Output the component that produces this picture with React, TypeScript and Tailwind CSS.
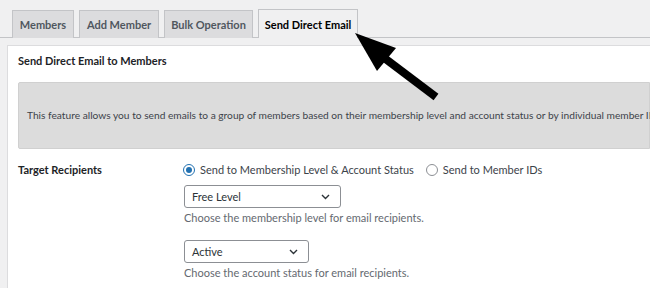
import React from 'react';

const TABS = [
  { label: 'Members', width: 'w-[62px]' },
  { label: 'Add Member', width: 'w-[80px]' },
  { label: 'Bulk Operation', width: 'w-[89px]' },
  { label: 'Send Direct Email', width: 'w-[100px]' },
];

function Select({ value, width }: { value: string; width: string }) {
  return (
    <div
      className={`${width} h-[23px] flex items-center justify-between pl-[7px] pr-[10px] bg-white border border-[#8c8f94] rounded-[3px] text-[11px] text-[#2c3338]`}
    >
      <span>{value}</span>
      <svg width="9" height="6" viewBox="0 0 9 6" fill="none">
        <path d="M1 1 L4.5 4.5 L8 1" stroke="#2c3338" strokeWidth="1.4" />
      </svg>
    </div>
  );
}

function Radio({ checked, label }: { checked: boolean; label: string }) {
  return (
    <label className="flex items-center gap-[5px]">
      <span
        className={`w-[12px] h-[12px] rounded-full border flex items-center justify-center bg-white ${
          checked ? 'border-[#2271b1]' : 'border-[#8c8f94]'
        }`}
      >
        {checked && <span className="w-[6px] h-[6px] rounded-full bg-[#2271b1]" />}
      </span>
      <span>{label}</span>
    </label>
  );
}

export default function App() {
  return (
    <div
      className="relative w-[650px] h-[288px] overflow-hidden bg-[#f0f0f1] text-[#3c434a]"
      style={{ fontFamily: 'Lato, "Open Sans", sans-serif' }}
    >
      <div className="flex items-end gap-[5px] pl-[12px] pt-[9px] border-b border-[#c3c4c7] h-[38px]">
        {TABS.map((tab, i) => {
          const active = i === TABS.length - 1;
          return (
            <div
              key={tab.label}
              className={`${tab.width} text-center text-[11px] leading-[16px] font-bold border border-[#c3c4c7] border-b-0 -mb-px ${
                active
                  ? 'h-[29px] pt-[7px] bg-[#f0f0f1] text-black'
                  : 'h-[28px] pt-[6px] bg-[#dcdcde] text-[#50575e]'
              }`}
            >
              {tab.label}
            </div>
          );
        })}
      </div>

      <div className="ml-[7px] mt-[7px] bg-white border border-[#dcdcde] border-r-0 pl-[10px] h-[300px]">
        <div className="pt-[7px] text-[11px] leading-[16px] font-bold text-[#1d2327]">
          Send Direct Email to Members
        </div>

        <div className="mt-[13px] h-[67px] bg-[#dcdcdc] border border-[#d0d0d0] rounded-l-[2px] flex items-center pl-[8px] whitespace-nowrap text-[10.2px]">
          This feature allows you to send emails to a group of members based on their membership level and account status or by individual member IDs. If
        </div>

        <div className="mt-[11px] flex text-[11px] leading-[16px]">
          <div className="w-[166px] font-bold text-[#1d2327] pt-[2px]">Target Recipients</div>
          <div className="flex flex-col">
            <div className="flex items-center gap-[12px] h-[20px] ml-[-1px]">
              <Radio checked label="Send to Membership Level & Account Status" />
              <Radio checked={false} label="Send to Member IDs" />
            </div>
            <div className="mt-[5px]">
              <Select value="Free Level" width="w-[157px]" />
            </div>
            <div className="mt-[2px] text-[#646970]">Choose the membership level for email recipients.</div>
            <div className="mt-[14px]">
              <Select value="Active" width="w-[125px]" />
            </div>
            <div className="mt-[2px] text-[#646970]">Choose the account status for email recipients.</div>
          </div>
        </div>
      </div>

      <svg className="absolute left-0 top-0 pointer-events-none" width="650" height="288" viewBox="0 0 650 288">
        <line x1="383" y1="57" x2="436" y2="97" stroke="#000" strokeWidth="8" />
        <polygon points="355,33 377,71 396,48" fill="#000" />
      </svg>
    </div>
  );
}
